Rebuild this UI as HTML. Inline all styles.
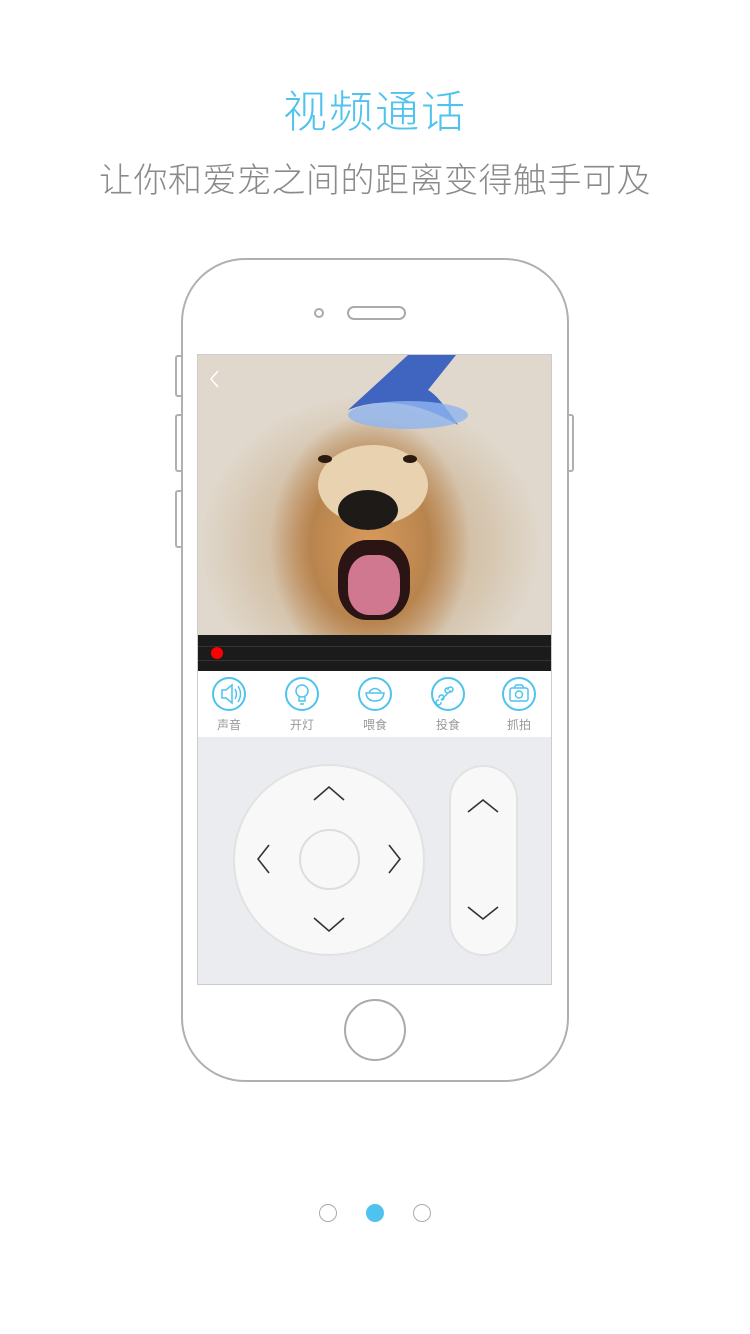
<!DOCTYPE html>
<html><head><meta charset="utf-8"><style>
*{margin:0;padding:0;box-sizing:border-box}
body{width:750px;height:1334px;background:#fff;position:relative;overflow:hidden;font-family:"Liberation Sans","Noto Sans CJK SC",sans-serif}
.a{position:absolute}
.t1{left:0;width:750px;top:76px;text-align:center;font-size:44px;color:#4fc3ee;letter-spacing:2px;font-weight:300}
.t2{left:0;width:750px;top:153px;text-align:center;font-size:34px;color:#8a8a8a;letter-spacing:0.5px;font-weight:300}
.ic{top:677px;width:34px;height:34px;border:2px solid #4fc3ee;border-radius:50%}
.lb{top:716px;width:60px;text-align:center;font-size:12px;color:#999}
</style></head><body>
<div class="a t1">视频通话</div>
<div class="a t2">让你和爱宠之间的距离变得触手可及</div>
<div class="a" style="left:181px;top:258px;width:388px;height:824px;border:2px solid #b0b0b0;border-radius:64px"></div>
<div class="a" style="left:175px;top:355px;width:7px;height:42px;border:2px solid #b0b0b0;border-right:none;border-radius:3px 0 0 3px"></div>
<div class="a" style="left:175px;top:414px;width:7px;height:58px;border:2px solid #b0b0b0;border-right:none;border-radius:3px 0 0 3px"></div>
<div class="a" style="left:175px;top:490px;width:7px;height:58px;border:2px solid #b0b0b0;border-right:none;border-radius:3px 0 0 3px"></div>
<div class="a" style="left:567px;top:414px;width:7px;height:58px;border:2px solid #b0b0b0;border-left:none;border-radius:0 3px 3px 0"></div>
<div class="a" style="left:314px;top:308px;width:10px;height:10px;border:2px solid #aaa;border-radius:50%"></div>
<div class="a" style="left:347px;top:306px;width:59px;height:14px;border:2px solid #aaa;border-radius:7px"></div>
<div class="a" style="left:197px;top:354px;width:355px;height:631px;border:1px solid #ccc;background:#ebecef;overflow:hidden">
 <div class="a" style="left:0;top:0;width:355px;height:280px;background:radial-gradient(ellipse 100px 130px at 172px 190px,#d79a5a 0,#b8844e 60%,rgba(200,150,100,0) 100%),radial-gradient(ellipse 170px 150px at 172px 190px,#c9a27a,#d6c6b0 70%,#e0d8cc)"></div>
 <div class="a" style="left:120px;top:90px;width:110px;height:80px;border-radius:50%;background:#e8d2b0"></div>
 <div class="a" style="left:140px;top:135px;width:60px;height:40px;border-radius:50%;background:#1e1a18"></div>
 <div class="a" style="left:140px;top:185px;width:72px;height:80px;border-radius:40%;background:#2a1414"></div>
 <div class="a" style="left:150px;top:200px;width:52px;height:60px;border-radius:40%;background:#d07890"></div>
 <div class="a" style="left:120px;top:100px;width:14px;height:8px;border-radius:50%;background:#2a1a10"></div>
 <div class="a" style="left:205px;top:100px;width:14px;height:8px;border-radius:50%;background:#2a1a10"></div>
 <svg class="a" style="left:140px;top:0" width="130" height="110"><path d="M10 55 Q60 35 120 70 Q100 40 90 35 L118 0 L70 0 Z" fill="#3f65c0"/><ellipse cx="70" cy="60" rx="60" ry="14" fill="#8fb5f0" opacity=".8"/></svg>
 <svg class="a" style="left:10px;top:14px" width="14" height="20"><path d="M10 2 L3 10 L10 18" stroke="#fff" stroke-width="1.5" fill="none"/></svg>
 <div class="a" style="left:0;top:280px;width:355px;height:36px;background:#1b1b1b"></div>
 <div class="a" style="left:0;top:291px;width:355px;height:1px;background:#333"></div>
 <div class="a" style="left:0;top:305px;width:355px;height:1px;background:#333"></div>
 <div class="a" style="left:13px;top:292px;width:12px;height:12px;border-radius:50%;background:#f00"></div>
 <div class="a" style="left:0;top:316px;width:355px;height:66px;background:#fff"></div>
</div>
<div class="a ic" style="left:212px"></div><div class="a ic" style="left:285px"></div><div class="a ic" style="left:358px"></div><div class="a ic" style="left:431px"></div><div class="a ic" style="left:502px"></div>
<svg class="a" style="left:0;top:0" width="750" height="1334" fill="none" stroke="#4fc3ee" stroke-width="1.5">
<path d="M222 690 h4 l6 -5 v18 l-6 -5 h-4 z"/><path d="M235 689 q3 5 0 10 M238 686 q5 8 0 16"/>
<circle cx="302" cy="691" r="6"/><path d="M299 697 v4 h6 v-4 M300 704 h4"/>
<path d="M366 693 h18 q-1 8 -9 8 q-8 0 -9 -8 z M369 692 q6 -7 12 0"/>
<path d="M441 700 l8 -8 m-10 6 a2.5 2.5 0 1 1 2 2 m7 -10 a2.5 2.5 0 1 1 2 2 m-9 10 a2.5 2.5 0 1 1 -2 -2 m11 -10 a2.5 2.5 0 1 1 -2 -2"/>
<rect x="510" y="688" width="18" height="13" rx="2"/><circle cx="519" cy="694.5" r="3.5"/><path d="M514 688 l2 -3 h6 l2 3"/>
</svg>
<div class="a lb" style="left:199px">声音</div><div class="a lb" style="left:272px">开灯</div><div class="a lb" style="left:345px">喂食</div><div class="a lb" style="left:418px">投食</div><div class="a lb" style="left:489px">抓拍</div>
<div class="a" style="left:233px;top:764px;width:192px;height:192px;border-radius:50%;background:#f8f8f8;border:2px solid #e2e2e2"></div>
<div class="a" style="left:299px;top:829px;width:61px;height:61px;border-radius:50%;border:2px solid #ddd;background:#f8f8f8"></div>
<div class="a" style="left:449px;top:765px;width:69px;height:191px;border-radius:35px;background:#f8f8f8;border:2px solid #e2e2e2"></div>
<svg class="a" style="left:0;top:0" width="750" height="1334" fill="none" stroke="#333" stroke-width="1.6">
<path d="M314 800 L329 787 L344 800"/><path d="M314 918 L329 931 L344 918"/><path d="M269 845 L258 859 L269 873"/><path d="M389 845 L400 859 L389 873"/>
<path d="M468 812 L483 800 L498 812"/><path d="M468 907 L483 919 L498 907"/>
</svg>
<div class="a" style="left:344px;top:999px;width:62px;height:62px;border-radius:50%;border:2px solid #aaa"></div>
<div class="a" style="left:319px;top:1204px;width:18px;height:18px;border-radius:50%;border:1.5px solid #aaa"></div>
<div class="a" style="left:366px;top:1204px;width:18px;height:18px;border-radius:50%;background:#4fc3ee"></div>
<div class="a" style="left:413px;top:1204px;width:18px;height:18px;border-radius:50%;border:1.5px solid #aaa"></div>
</body></html>
